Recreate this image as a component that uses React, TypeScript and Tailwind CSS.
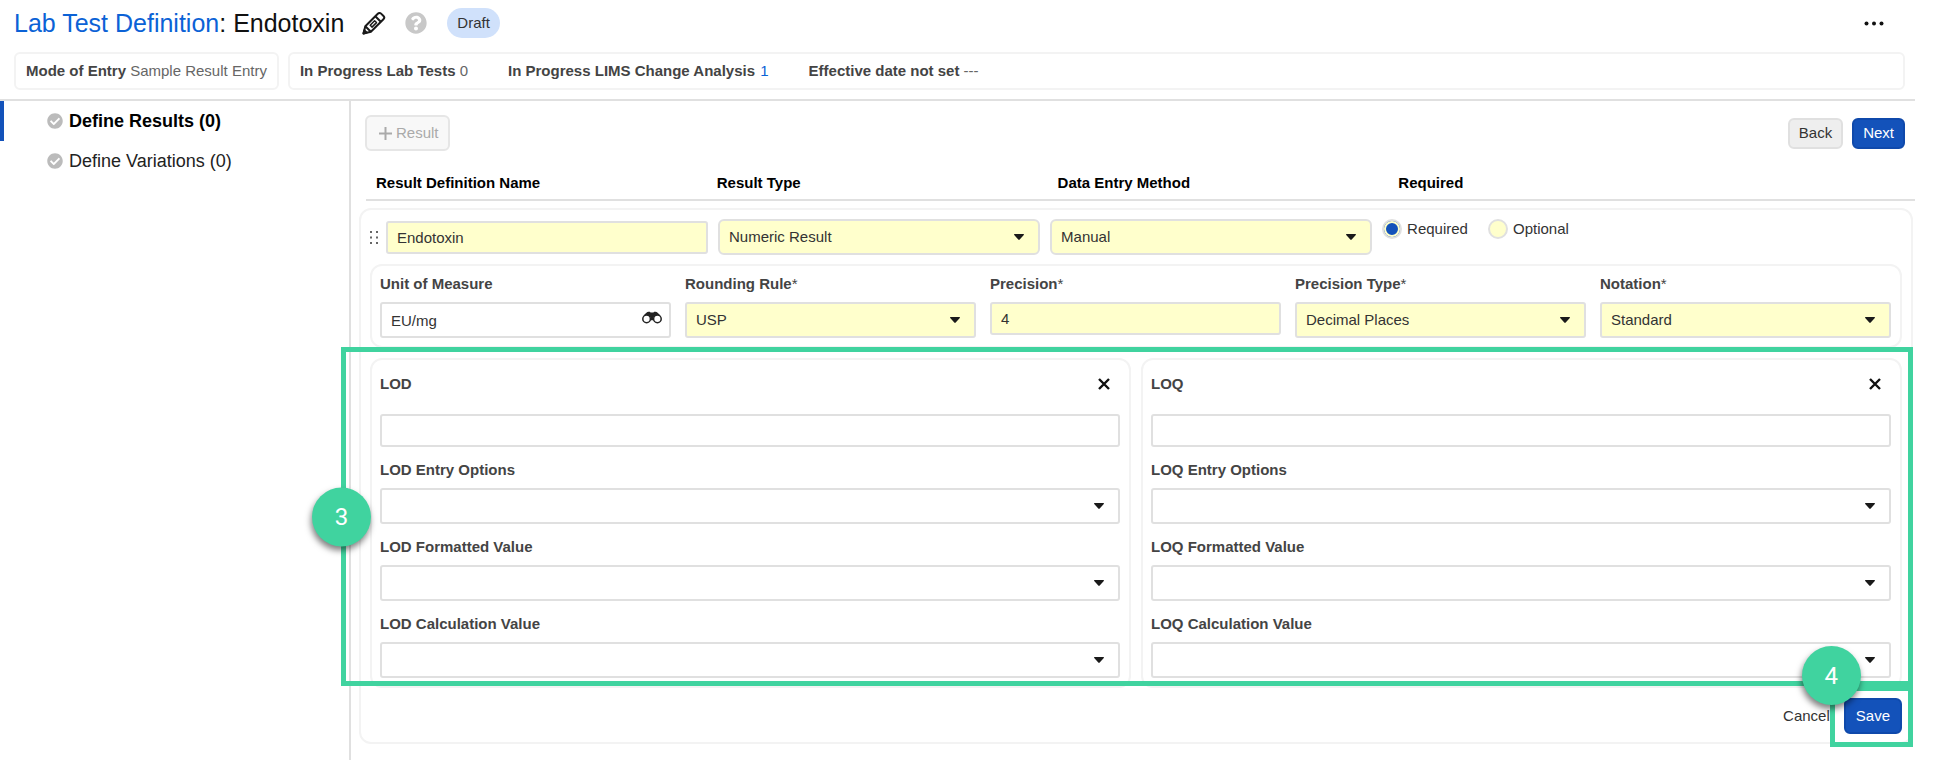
import type { ReactNode } from "react";
import { FaCheckCircle, FaQuestionCircle } from "react-icons/fa";

const fieldBase = "w-full border-2 border-[#e0e0e0] pl-[9px] text-[15px] leading-5 text-[#333] outline-none";

function PencilIcon() {
  return (
    <svg viewBox="0 0 24 24" className="size-6" fill="none" stroke="#1a1a1a" strokeWidth="2" strokeLinejoin="round">
      <path d="M1.500 22.500l1.800-7.300L15.800 2.700c1-1 2.400-1 3.300-.1l2.400 2.400c.9.9.9 2.300-.1 3.300L8.900 20.700z" />
      <path d="M3.300 15.200l5.600 5.500M13.300 5.300l5.500 5.500" />
      <path d="M8.200 14.200l4.400-4.400 1.900 1.800-4.500 4.500z" strokeWidth="1.500" />
      <path d="M1.500 22.500l.8-3.300 2.500 2.400z" fill="#1a1a1a" />
    </svg>
  );
}

function BinocularsIcon() {
  return (
    <svg viewBox="0 0 20 13" className="h-[13px] w-5" fill="none" stroke="#222" strokeWidth="1.5">
      <circle cx="4.600" cy="7.900" r="3.800" />
      <circle cx="15.400" cy="7.900" r="3.800" />
      <path d="M1.600 5C3.200 2.400 5 .8 6.600.8h1.200l.8.8h2.800l.8-.8h1.200c1.600 0 3.400 1.600 5 4.200-3-1.700-5.800-1-7 1.800L11 9.200H9l-.4-2.400C7.400 4 4.600 3.300 1.600 5z" fill="#222" stroke="none" />
    </svg>
  );
}

function CloseIcon() {
  return (
    <svg viewBox="0 0 12 12" className="size-3" stroke="#111" strokeWidth="2.4">
      <path d="M1 1l10 10M11 1L1 11" />
    </svg>
  );
}

interface SelectProps {
  id: string;
  options: string[];
  required?: boolean;
  rounded?: boolean;
  ariaLabel?: string;
}

function Select({ id, options, required, rounded, ariaLabel }: SelectProps) {
  return (
    <div className="relative">
      <select
        id={id}
        aria-label={ariaLabel}
        className={`${fieldBase} block h-9 appearance-none pr-8 ${required ? "bg-[#ffffcc]" : "bg-white"} ${rounded ? "rounded-md" : "rounded-[3px]"}`}
      >
        {options.map((option) => (
          <option key={option}>{option}</option>
        ))}
      </select>
      <svg viewBox="0 0 10 6" className="pointer-events-none absolute top-[15px] right-4 h-1.5 w-2.5" fill="#1a1a1a">
        <path d="M.6 0h8.800c.5 0 .8.6.4 1L5.700 5.600a1 1 0 0 1-1.400 0L.2 1C-.2.6.1 0 .6 0z" />
      </svg>
    </div>
  );
}

interface FieldProps {
  id: string;
  label: string;
  required?: boolean;
  children: ReactNode;
}

function Field({ id, label, required, children }: FieldProps) {
  return (
    <div className="flex min-w-0 flex-col gap-2">
      <label htmlFor={id} className="text-[15px] leading-5 font-bold text-[#444]">
        {label}
        {required && <span className="font-normal">*</span>}
      </label>
      {children}
    </div>
  );
}

function LimitCard({ name }: { name: string }) {
  const id = name.toLowerCase();
  return (
    <section className="rounded-xl border-2 border-[#f3f3f3] py-2 pr-[9px] pl-2">
      <div className="mb-[14px] flex h-8 items-center justify-between">
        <label htmlFor={id} className="text-[15px] leading-5 font-bold text-[#444]">
          {name}
        </label>
        <button type="button" aria-label={`Remove ${name}`} className="mr-[10px]">
          <CloseIcon />
        </button>
      </div>
      <input id={id} className={`${fieldBase} block h-[33px] rounded-[3px]`} />
      <div className="mt-[13px] flex flex-col gap-[13px]">
        {["Entry Options", "Formatted Value", "Calculation Value"].map((field, i) => (
          <Field key={field} id={`${id}-${i}`} label={`${name} ${field}`}>
            <Select id={`${id}-${i}`} options={[""]} />
          </Field>
        ))}
      </div>
    </section>
  );
}

function StepBadge({ step, className }: { step: number; className: string }) {
  return (
    <span
      className={`absolute flex size-[59px] items-center justify-center rounded-full bg-[#40d39f] font-['Roboto',sans-serif] text-2xl text-white shadow-[-1px_4px_6px_rgba(0,0,0,0.5)] ${className}`}
    >
      {step}
    </span>
  );
}

function RequiredOption({ label, checked }: { label: string; checked?: boolean }) {
  return (
    <label className="flex items-center gap-[5px] text-[15px] leading-5 text-[#333]">
      <input
        type="radio"
        name="required"
        defaultChecked={checked}
        className="size-5 appearance-none rounded-full border-2 border-[#e0e0e0] bg-[#ffffcc] checked:bg-[#1352ba] checked:shadow-[inset_0_0_0_2px_#ffffcc]"
      />
      {label}
    </label>
  );
}

export default function App() {
  return (
    <div className="flex min-h-screen flex-col bg-white pr-[25px] font-['Liberation_Sans',Arial,sans-serif] text-[15px] leading-5 text-[#333]">
      <header className="border-b-2 border-[#e0e0e0] pr-[10px] pb-[9px] pl-[14px]">
        <div className="flex h-[52px] items-center pb-[6px]">
          <h1 className="text-[25px] leading-8 text-[#111]">
            <a href="#" className="text-[#0b62d6]">Lab Test Definition</a>: Endotoxin
          </h1>
          <button type="button" aria-label="Edit name" className="ml-[18px]">
            <PencilIcon />
          </button>
          <button type="button" aria-label="Help" className="ml-[19px]">
            <FaQuestionCircle className="size-[22px] text-[#c8c8c8]" />
          </button>
          <span className="ml-5 rounded-full bg-[#d0e1fb] px-[10px] py-[5px]">Draft</span>
          <button type="button" aria-label="More actions" className="ml-auto mr-[21px]">
            <svg viewBox="0 0 20 5" className="h-[5px] w-5" fill="#111">
              <circle cx="2.500" cy="2.500" r="2" />
              <circle cx="10" cy="2.500" r="2" />
              <circle cx="17.500" cy="2.500" r="2" />
            </svg>
          </button>
        </div>
        <div className="flex gap-[9px] text-[#666]">
          <div className="rounded-md border-2 border-[#f3f3f3] px-[10px] py-[7px]">
            <b className="text-[#444]">Mode of Entry</b> Sample Result Entry
          </div>
          <div className="flex flex-1 gap-10 rounded-md border-2 border-[#f3f3f3] px-[10px] py-[7px]">
            <span><b className="text-[#444]">In Progress Lab Tests</b> 0</span>
            <span>
              <b className="text-[#444]">In Progress LIMS Change Analysis</b>{" "}
              <a href="#" className="ml-px text-[#0b62d6]">1</a>
            </span>
            <span><b className="text-[#444]">Effective date not set</b> ---</span>
          </div>
        </div>
      </header>

      <div className="flex flex-1">
        <nav className="w-[351px] shrink-0 border-r-2 border-[#e0e0e0] text-lg text-[#222]">
          <a href="#" className="flex h-10 items-center gap-1.5 border-l-4 border-[#1352ba] pl-[43px] font-bold text-black">
            <FaCheckCircle className="size-4 text-[#bbb]" />
            Define Results (0)
          </a>
          <a href="#" className="flex h-10 items-center gap-1.5 border-l-4 border-transparent pl-[43px]">
            <FaCheckCircle className="size-4 text-[#bbb]" />
            Define Variations (0)
          </a>
        </nav>

        <main className="min-w-0 flex-1">
          <div className="flex items-center pt-[14px] pr-[10px] pl-[14px]">
            <button type="button" disabled className="flex h-9 items-center gap-1 rounded-md border-2 border-[#e6e6e6] bg-[#f8f8f8] pr-[9px] pl-3 text-[#aaa]">
              <svg viewBox="0 0 13 13" className="size-[13px]" stroke="#aaa" strokeWidth="2">
                <path d="M6.500 0v13M0 6.500h13" />
              </svg>
              Result
            </button>
            <button type="button" className="ml-auto h-[31px] rounded-md border-2 border-[#e0e0e0] bg-[#eee] px-[9px]">Back</button>
            <button type="button" className="ml-[9px] h-[31px] rounded-md border-2 border-[#0f49ab] bg-[#1352ba] px-[9px] text-white">Next</button>
          </div>

          <div className="mt-[22px] ml-[15px] grid grid-cols-[22fr_22fr_22fr_34fr] border-b-2 border-[#e0e0e0] pb-[6px] font-bold text-black">
            <span className="pl-[10px]">Result Definition Name</span>
            <span className="pl-[10px]">Result Type</span>
            <span className="pl-[10px]">Data Entry Method</span>
            <span className="pl-[10px]">Required</span>
          </div>

          <form className="mt-[7px] mr-0.5 mb-4 ml-2 rounded-xl border-2 border-[#f3f3f3] px-[9px] pt-[9px] pb-2">
            <div className="flex items-center">
              <svg viewBox="0 0 8 13" className="mr-2 h-[13px] w-2 shrink-0" fill="#666">
                <path d="M0 0h2v2H0zM6 0h2v2H6zM0 5.500h2v2H0zM6 5.500h2v2H6zM0 11h2v2H0zM6 11h2v2H6z" />
              </svg>
              <div className="grid flex-1 grid-cols-[12fr_12fr_12fr_12fr_7fr] items-center gap-[10px]">
                <input aria-label="Result Definition Name" defaultValue="Endotoxin" className={`${fieldBase} h-[33px] rounded-[3px] bg-[#ffffcc]`} />
                <Select id="result-type" ariaLabel="Result Type" options={["Numeric Result"]} required rounded />
                <Select id="entry-method" ariaLabel="Data Entry Method" options={["Manual"]} required rounded />
                <div className="flex gap-5 self-start">
                  <RequiredOption label="Required" checked />
                  <RequiredOption label="Optional" />
                </div>
              </div>
            </div>

            <section className="mt-[9px] grid grid-cols-5 gap-[14px] rounded-xl border-2 border-[#f3f3f3] py-2 pr-[9px] pl-2">
              <Field id="unit" label="Unit of Measure">
                <div className="relative">
                  <input id="unit" defaultValue="EU/mg" className={`${fieldBase} block h-9 rounded-[3px] pr-9`} />
                  <button type="button" aria-label="Look up unit" className="absolute top-[9px] right-[9px]">
                    <BinocularsIcon />
                  </button>
                </div>
              </Field>
              <Field id="rounding" label="Rounding Rule" required>
                <Select id="rounding" options={["USP"]} required />
              </Field>
              <Field id="precision" label="Precision" required>
                <input id="precision" defaultValue="4" className={`${fieldBase} h-[33px] rounded-[3px] bg-[#ffffcc]`} />
              </Field>
              <Field id="precision-type" label="Precision Type" required>
                <Select id="precision-type" options={["Decimal Places"]} required />
              </Field>
              <Field id="notation" label="Notation" required>
                <Select id="notation" options={["Standard"]} required />
              </Field>
            </section>

            <div className="relative mt-[10px] grid grid-cols-2 gap-[10px]">
              <LimitCard name="LOD" />
              <LimitCard name="LOQ" />
              <div className="pointer-events-none absolute -top-[11px] -right-[11px] bottom-[2px] -left-[29px] border-5 border-[#40d39f]">
                <StepBadge step={3} className="top-1/2 -left-[34px] -translate-y-1/2" />
              </div>
            </div>

            <div className="mt-[10px] flex items-center justify-end gap-[14px]">
              <button type="button">Cancel</button>
              <div className="relative">
                <button type="submit" className="block h-9 rounded-md border-2 border-[#0f49ab] bg-[#1352ba] px-[10px] text-white">Save</button>
                <div className="pointer-events-none absolute -top-3 -right-[11px] -bottom-[13px] -left-[14px] border-5 border-[#40d39f]">
                  <StepBadge step={4} className="-top-[45px] -left-[33px]" />
                </div>
              </div>
            </div>
          </form>
        </main>
      </div>
    </div>
  );
}
